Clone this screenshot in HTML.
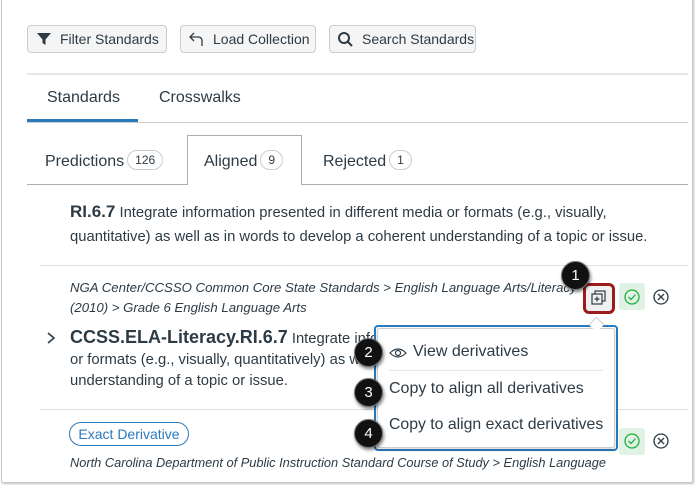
<!DOCTYPE html>
<html><head><style>
*{box-sizing:border-box;margin:0;padding:0}
body{width:695px;height:485px;background:#fff;font-family:"Liberation Sans",sans-serif;color:#2d3b45;position:relative;overflow:hidden}
.a{position:absolute;white-space:nowrap}
.frame{position:absolute;left:1px;top:-2px;width:692px;height:485px;border:1px solid #c8c8c8;border-radius:2px;box-shadow:1px 1px 2px rgba(0,0,0,.25)}
.btn{position:absolute;top:25px;height:28px;background:#f5f5f5;border:1px solid #c7cdd1;border-radius:4px;font-size:14px;line-height:26px;padding-left:32px;color:#2d3b45}
.hl{position:absolute;height:1px;background:#c7cdd1}
.pill{display:inline-block;border:1px solid #c7cdd1;border-radius:10px;font-size:12px;line-height:18px;padding:0 7px;vertical-align:2px;margin-left:3px}
.call{position:absolute;width:29px;height:29px;border-radius:50%;background:#111;color:#fff;font-size:15px;text-align:center;line-height:27px;box-shadow:1px 2px 3px rgba(0,0,0,.5);border:1px solid #777}
.t{font-size:14.8px;line-height:24px}
.i{font-style:italic;font-size:13.2px;line-height:20px}
</style></head><body>
<div class="frame"></div>
<div class="btn" style="left:27px;width:140px">Filter Standards</div>
<svg class="a" style="left:36px;top:31px" width="16" height="16"><path d="M1 2H15L9.5 8.5V14L6.5 12V8.5Z" fill="#2d3b45"/></svg>
<div class="btn" style="left:180px;width:136px">Load Collection</div>
<svg class="a" style="left:188px;top:31px" width="16" height="16"><path d="M6 2L2 6L6 10M2 6H10Q14 6 14 10V15" fill="none" stroke="#2d3b45" stroke-width="1.3"/></svg>
<div class="btn" style="left:329px;width:147px">Search Standards</div>
<svg class="a" style="left:337px;top:31px" width="16" height="16"><circle cx="7" cy="7" r="5" fill="none" stroke="#2d3b45" stroke-width="2"/><path d="M10.5 10.5L15 15" stroke="#2d3b45" stroke-width="2"/></svg>
<div class="hl" style="left:27px;top:73px;width:661px;height:2px;background:#e6e6e6"></div>
<div class="a" style="left:47px;top:89px;font-size:16px">Standards</div>
<div class="a" style="left:159px;top:89px;font-size:16px">Crosswalks</div>
<div class="hl" style="left:27px;top:122px;width:661px"></div>
<div class="a" style="left:27px;top:119px;width:111px;height:3px;background:#2b7abc"></div>
<div class="a" style="left:45px;top:150px;font-size:16px">Predictions<span class="pill">126</span></div>
<div class="a" style="left:187px;top:135px;width:115px;height:50px;border:1px solid #a5afb5;border-bottom:none;background:#fff"></div>
<div class="hl" style="left:27px;top:184px;width:160px;background:#a5afb5"></div>
<div class="hl" style="left:301px;top:184px;width:387px;background:#a5afb5"></div>
<div class="a" style="left:204px;top:150px;font-size:16px">Aligned<span class="pill">9</span></div>
<div class="a" style="left:323px;top:150px;font-size:16px">Rejected<span class="pill">1</span></div>
<div class="a t" style="left:70px;top:200px"><b style="font-size:17px">RI.6.7</b> Integrate information presented in different media or formats (e.g., visually,<br>quantitative) as well as in words to develop a coherent understanding of a topic or issue.</div>
<div class="hl" style="left:40px;top:265px;width:648px;background:#dde1e3"></div>
<div class="a i" style="left:70px;top:278px">NGA Center/CCSSO Common Core State Standards &gt; English Language Arts/Literacy<br>(2010) &gt; Grade 6 English Language Arts</div>
<svg class="a" style="left:45px;top:331px" width="12" height="14"><path d="M3 2L9 7L3 12" fill="none" stroke="#2d3b45" stroke-width="1.6"/></svg>
<div class="a t" style="left:70px;top:327px;line-height:21px"><b style="font-size:18px">CCSS.ELA-Literacy.RI.6.7</b> Integrate informati<br>or formats (e.g., visually, quantitatively) as well a<br>understanding of a topic or issue.</div>
<div class="hl" style="left:40px;top:409px;width:648px;background:#dde1e3"></div>
<div class="a" style="left:69px;top:422px;width:120px;height:24px;border:1px solid #2b7abc;border-radius:12px;color:#2b7abc;font-size:14px;line-height:22px;text-align:center">Exact Derivative</div>
<div class="a i" style="left:70px;top:453px;font-size:12.8px">North Carolina Department of Public Instruction Standard Course of Study &gt; English Language</div>
<div class="a" style="left:583px;top:283px;width:32px;height:31px;border:3px solid #9b1c1c;border-radius:6px;background:#f0f0f0"></div>
<svg class="a" style="left:591px;top:290px" width="16" height="16"><rect x="4" y="1" width="10" height="10" fill="none" stroke="#2d3b45" stroke-width="1.2"/><rect x="1" y="4" width="10" height="10" fill="#f0f0f0" stroke="#2d3b45" stroke-width="1.2"/><path d="M6 6.5V11.5M3.5 9H8.5" stroke="#2d3b45" stroke-width="1.2"/></svg>
<div class="a" style="left:619px;top:283px;width:26px;height:27px;background:#e0f2e4;border-radius:3px"></div>
<svg class="a" style="left:623px;top:288px" width="18" height="18"><circle cx="9" cy="9" r="7" fill="none" stroke="#1faf3c" stroke-width="1.3"/><path d="M5.5 9L8 11.5L12.5 6.5" fill="none" stroke="#1faf3c" stroke-width="1.3"/></svg>
<svg class="a" style="left:652px;top:288px" width="18" height="18"><circle cx="9" cy="9" r="7" fill="none" stroke="#2d3b45" stroke-width="1.3"/><path d="M6 6L12 12M12 6L6 12" stroke="#2d3b45" stroke-width="1.3"/></svg>
<div class="a" style="left:619px;top:428px;width:26px;height:27px;background:#e0f2e4;border-radius:3px"></div>
<svg class="a" style="left:623px;top:432px" width="18" height="18"><circle cx="9" cy="9" r="7" fill="none" stroke="#1faf3c" stroke-width="1.3"/><path d="M5.5 9L8 11.5L12.5 6.5" fill="none" stroke="#1faf3c" stroke-width="1.3"/></svg>
<svg class="a" style="left:652px;top:432px" width="18" height="18"><circle cx="9" cy="9" r="7" fill="none" stroke="#2d3b45" stroke-width="1.3"/><path d="M6 6L12 12M12 6L6 12" stroke="#2d3b45" stroke-width="1.3"/></svg>
<div class="a" style="left:374px;top:325px;width:244px;height:126px;border:2px solid #2b7abc;border-radius:4px;background:#fff"></div>
<div class="a" style="left:377px;top:328px;width:238px;height:120px;border:1px solid #c7cdd1;border-radius:3px;background:#fff;box-shadow:0 2px 4px rgba(0,0,0,.15)"></div>
<div class="a" style="left:591px;top:319px;width:11px;height:11px;background:#fff;border-left:1px solid #c7cdd1;border-top:1px solid #c7cdd1;transform:rotate(45deg)"></div>
<svg class="a" style="left:389px;top:346px" width="18" height="14"><path d="M1 7Q9 -1 17 7Q9 15 1 7Z" fill="none" stroke="#2d3b45" stroke-width="1.2"/><circle cx="9" cy="7" r="2.5" fill="none" stroke="#2d3b45" stroke-width="1.2"/></svg>
<div class="a" style="left:413px;top:343px;font-size:16px">View derivatives</div>
<div class="hl" style="left:389px;top:370px;width:214px;background:#e6e6e6"></div>
<div class="a" style="left:389px;top:380px;font-size:16px">Copy to align all derivatives</div>
<div class="a" style="left:389px;top:416px;font-size:15.8px">Copy to align exact derivatives</div>
<div class="call" style="left:561px;top:261px">1</div>
<div class="call" style="left:354px;top:338px">2</div>
<div class="call" style="left:354px;top:378px">3</div>
<div class="call" style="left:354px;top:419px">4</div>
</body></html>
